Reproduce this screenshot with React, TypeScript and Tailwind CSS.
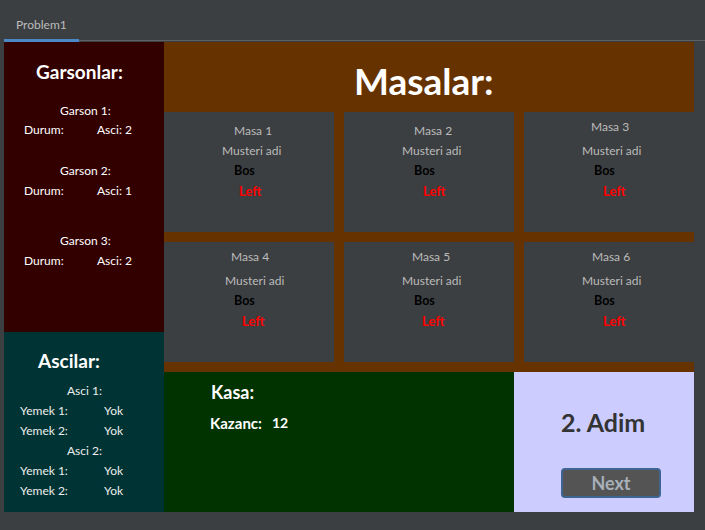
import React from "react";

type Masa = { name: string; top: string; masa: string; musteri: string; left: string };

const masalar: Masa[] = [
  { name: "Masa 1", top: "mt-[9px]", masa: "ml-[70px]", musteri: "ml-[58px]", left: "ml-[75px]" },
  { name: "Masa 2", top: "mt-[9px]", masa: "ml-[70px]", musteri: "ml-[58px]", left: "ml-[79px]" },
  { name: "Masa 3", top: "mt-[5px] mb-[4px]", masa: "ml-[67px]", musteri: "ml-[58px]", left: "ml-[79px]" },
  { name: "Masa 4", top: "mt-[5px] mb-[4px]", masa: "ml-[67px]", musteri: "ml-[61px]", left: "ml-[78px]" },
  { name: "Masa 5", top: "mt-[5px] mb-[4px]", masa: "ml-[68px]", musteri: "ml-[58px]", left: "ml-[78px]" },
  { name: "Masa 6", top: "mt-[5px] mb-[4px]", masa: "ml-[68px]", musteri: "ml-[58px]", left: "ml-[79px]" },
];

function MasaCell({ m }: { m: Masa }) {
  return (
    <div className="flex flex-col bg-[#3c3f41] text-[12px] leading-[20px]">
      <div className={`${m.top} ${m.masa} h-[20px] text-[#bbbbbb]`}>{m.name}</div>
      <div className={`${m.musteri} h-[20px] text-[#bbbbbb]`}>Musteri adi</div>
      <div className="ml-[70px] h-[20px] text-[12.5px] font-bold text-black">Bos</div>
      <div className={`${m.left} h-[20px] text-[13px] font-bold text-[#ff0000]`}>Left</div>
    </div>
  );
}

function Garson({ n, asci, mt, rowMt }: { n: number; asci: number; mt: string; rowMt: string }) {
  return (
    <>
      <div className={`${mt} ml-[56px] h-[19px] leading-[19px]`}>Garson {n}:</div>
      <div className={`${rowMt} flex h-[19px] leading-[19px]`}>
        <span className="ml-[20px] w-[73px]">Durum:</span>
        <span>Asci: {asci}</span>
      </div>
    </>
  );
}

function YemekRow({ label }: { label: string }) {
  return (
    <div className="flex h-[20px] leading-[20px]">
      <span className="ml-[16px] w-[84px]">{label}</span>
      <span>Yok</span>
    </div>
  );
}

export default function App() {
  return (
    <div className="w-[705px] h-[530px] bg-[#3c3f41] font-['Lato',sans-serif] overflow-hidden">
      {/* tab bar */}
      <div className="flex h-[42px] items-end pl-[4px]">
        <div className="w-[75px] h-full flex flex-col border-b-[3px] border-[#4a88c7]">
          <div className="pt-[15px] pl-[12px] text-[12px] leading-[20px] text-[#bbbbbb]">Problem1</div>
        </div>
        <div className="flex-1 h-[1px] mb-[1px] bg-[#5e6164]" />
      </div>

      <div className="flex pl-[4px]">
        {/* left column */}
        <div className="w-[160px] flex flex-col text-white text-[12px]">
          <div className="h-[290px] bg-[#330000] flex flex-col">
            <div className="mt-[20px] ml-[32px] h-[20px] leading-[20px] text-[19px] font-bold">Garsonlar:</div>
            <Garson n={1} asci={2} mt="mt-[19px]" rowMt="mt-0" />
            <Garson n={2} asci={1} mt="mt-[22px]" rowMt="mt-[1px]" />
            <Garson n={3} asci={2} mt="mt-[31px]" rowMt="mt-[1px]" />
          </div>
          <div className="h-[180px] bg-[#003333] flex flex-col text-[#eeeeee]">
            <div className="mt-[19px] ml-[34px] h-[20px] leading-[20px] text-[19px] font-bold text-white">Ascilar:</div>
            <div className="mt-[10px] ml-[63px] h-[20px] leading-[20px]">Asci 1:</div>
            <YemekRow label="Yemek 1:" />
            <YemekRow label="Yemek 2:" />
            <div className="ml-[63px] h-[20px] leading-[20px]">Asci 2:</div>
            <YemekRow label="Yemek 1:" />
            <YemekRow label="Yemek 2:" />
          </div>
        </div>

        {/* right column */}
        <div className="w-[530px] bg-[#663300] flex flex-col">
          <div className="h-[70px] flex items-center pl-[190px] pt-[7px] text-[37px] font-bold text-white">
            Masalar:
          </div>
          <div className="grid grid-cols-3 auto-rows-[120px] gap-[10px] pb-[10px]">
            {masalar.map((m) => (
              <MasaCell key={m.name} m={m} />
            ))}
          </div>
          <div className="flex h-[140px]">
            <div className="w-[350px] bg-[#003300] flex flex-col text-white">
              <div className="mt-[10px] ml-[47px] h-[20px] leading-[20px] text-[18px] font-bold">Kasa:</div>
              <div className="mt-[11px] flex h-[20px] leading-[20px] font-bold">
                <span className="ml-[46px] w-[62px] text-[15px]">Kazanc:</span>
                <span className="text-[14px]">12</span>
              </div>
            </div>
            <div className="w-[180px] bg-[#ccccff] flex flex-col">
              <div className="mt-[35px] ml-[47px] h-[30px] leading-[30px] text-[25px] font-bold text-[#333333]">2. Adim</div>
              <button className="mt-[31px] ml-[47px] w-[100px] h-[30px] rounded-[4px] border-2 border-[#3e6491] bg-[#545454] text-[18px] font-bold text-[#a8b0b8] leading-none">
                Next
              </button>
            </div>
          </div>
        </div>
      </div>
    </div>
  );
}
